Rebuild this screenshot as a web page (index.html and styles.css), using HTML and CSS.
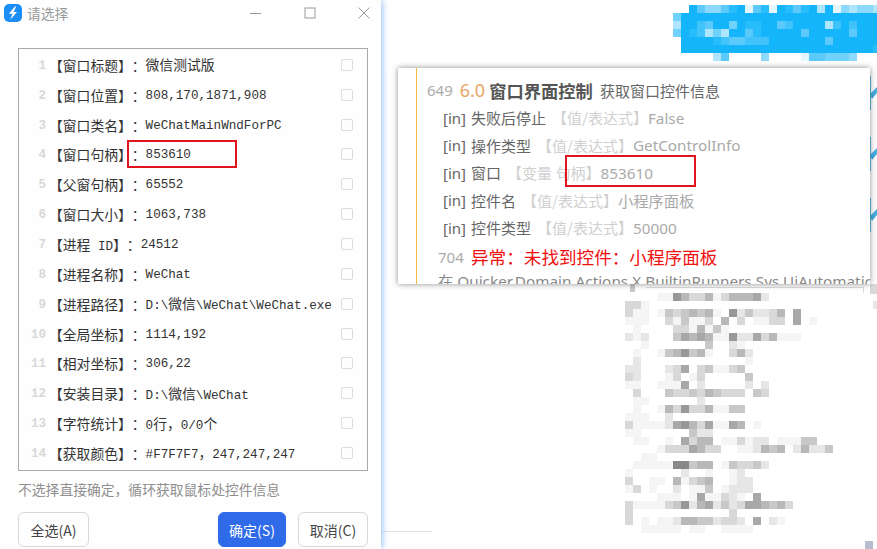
FILE: index.html
```html
<!DOCTYPE html>
<html lang="en">

<head>
    <meta charset="UTF-8" />
    <meta name="viewport" content="width=device-width, initial-scale=1.0" />
    <title>请选择</title>
    <link rel="stylesheet" href="styles.css">
</head>

<body>
    <div class="dialog">
        <div class="title-bar">
            <svg class="app-icon" viewBox="0 0 18 18" width="18" height="18">
                <rect width="18" height="18" rx="5" fill="#1c8df5" />
                <path d="M11 2.6 4.8 9.8h3.6L6.4 15.4 13 7.9H9.6l2.6-5.3z" fill="#fff" />
            </svg>
            <div class="title-text">请选择</div>
            <div class="win-buttons">
                <svg viewBox="0 0 12 12" width="12" height="12"><path d="M0 6.5h11" stroke="#999" fill="none" /></svg>
                <svg viewBox="0 0 12 12" width="12" height="12"><rect x="1" y="1" width="10" height="10" stroke="#999" fill="none" /></svg>
                <svg viewBox="0 0 12 12" width="12" height="12"><path d="M.5.5l11 11M11.5.5l-11 11" stroke="#999" fill="none" /></svg>
            </div>
        </div>

        <div class="list-box">
            <div class="row"><span class="num">1</span><span class="key">【窗口标题】：</span><span class="val"><span class="cn">微信测试版</span></span><span class="check"></span></div>
            <div class="row"><span class="num">2</span><span class="key">【窗口位置】：</span><span class="val">808,170,1871,908</span><span class="check"></span></div>
            <div class="row"><span class="num">3</span><span class="key">【窗口类名】：</span><span class="val">WeChatMainWndForPC</span><span class="check"></span></div>
            <div class="row"><span class="num">4</span><span class="key">【窗口句柄】：</span><span class="val">853610</span><span class="check"></span></div>
            <div class="row"><span class="num">5</span><span class="key">【父窗句柄】：</span><span class="val">65552</span><span class="check"></span></div>
            <div class="row"><span class="num">6</span><span class="key">【窗口大小】：</span><span class="val">1063,738</span><span class="check"></span></div>
            <div class="row"><span class="num">7</span><span class="key">【进程<span class="mono"> ID</span>】：</span><span class="val">24512</span><span class="check"></span></div>
            <div class="row"><span class="num">8</span><span class="key">【进程名称】：</span><span class="val">WeChat</span><span class="check"></span></div>
            <div class="row"><span class="num">9</span><span class="key">【进程路径】：</span><span class="val">D:\<span class="cn">微信</span>\WeChat\WeChat.exe</span><span class="check"></span></div>
            <div class="row"><span class="num">10</span><span class="key">【全局坐标】：</span><span class="val">1114,192</span><span class="check"></span></div>
            <div class="row"><span class="num">11</span><span class="key">【相对坐标】：</span><span class="val">306,22</span><span class="check"></span></div>
            <div class="row"><span class="num">12</span><span class="key">【安装目录】：</span><span class="val">D:\<span class="cn">微信</span>\WeChat</span><span class="check"></span></div>
            <div class="row"><span class="num">13</span><span class="key">【字符统计】：</span><span class="val">0<span class="cn">行，</span>0/0<span class="cn">个</span></span><span class="check"></span></div>
            <div class="row"><span class="num">14</span><span class="key">【获取颜色】：</span><span class="val">#F7F7F7<span class="cn">，</span>247,247,247</span><span class="check"></span></div>
            <div class="mark mark-left"></div>
        </div>

        <div class="hint">不选择直接确定，循环获取鼠标处控件信息</div>

        <div class="actions">
            <button class="btn btn-all">全选(A)</button>
            <button class="btn btn-ok">确定(S)</button>
            <button class="btn btn-cancel">取消(C)</button>
        </div>
    </div>

    <div class="backdrop">
        <svg class="mosaic" id="mosaic" width="877" height="549" viewBox="0 0 877 549"></svg>
    </div>

    <div class="log-card">
        <div class="log-inner">
            <div class="log-head"><span class="line-no">649</span><span class="version">6.0</span><b class="step">窗口界面控制</b><span class="step-note">获取窗口控件信息</span></div>
            <div class="param"><span class="tag">[in]</span><span class="pname">失败后停止</span><span class="ptype">【值/表达式】</span><span class="pval">False</span></div>
            <div class="param"><span class="tag">[in]</span><span class="pname">操作类型</span><span class="ptype">【值/表达式】</span><span class="pval">GetControlInfo</span></div>
            <div class="param"><span class="tag">[in]</span><span class="pname">窗口</span><span class="ptype">【变量 句柄】</span><span class="pval">853610</span></div>
            <div class="param"><span class="tag">[in]</span><span class="pname">控件名</span><span class="ptype">【值/表达式】</span><span class="pval">小程序面板</span></div>
            <div class="param"><span class="tag">[in]</span><span class="pname">控件类型</span><span class="ptype">【值/表达式】</span><span class="pval">50000</span></div>
            <div class="log-error"><span class="err-no">704</span><span class="err-text">异常：未找到控件：小程序面板</span></div>
            <div class="log-trace">在 Quicker.Domain.Actions.X.BuiltinRunners.Sys.UiAutomatic</div>
        </div>
        <div class="mark mark-right"></div>
    </div>

    <script src="mosaic.js"></script>
</body>

</html>
```

FILE: styles.css
```css
html, body {
    margin: 0;
    padding: 0;
    height: 549px;
    overflow: hidden;
    background: white;
    font-family: "Noto Sans", "Noto Sans CJK SC", sans-serif;
    text-spacing-trim: space-all;
}

body {
    display: flex;
}

.dialog {
    width: 381px;
    height: 549px;
    box-sizing: border-box;
    padding: 0 13px 0 18px;
    background: #fefefe;
    box-shadow: 1px 0 7px #8fbdf5;
    position: relative;
    z-index: 2;
    font-family: "Noto Sans CJK SC", sans-serif;
}

.title-bar {
    height: 48px;
    display: flex;
    align-items: flex-start;
    margin-left: -14px;
    margin-right: -2px;
    padding-top: 4px;
    box-sizing: border-box;
}

.app-icon {
    flex: none;
}

.title-text {
    margin-left: 5px;
    font-size: 13.8px;
    line-height: 18px;
    color: #9a9a9a;
}

.win-buttons {
    margin-left: auto;
    display: flex;
    gap: 42px;
    padding-top: 3px;
}

.list-box {
    position: relative;
    height: 423px;
    box-sizing: border-box;
    padding: 2px 0 0;
    border: 1px solid #aaa;
}

.row {
    height: 29.85px;
    display: flex;
    align-items: center;
    font-size: 13.8px;
    color: #333;
}

.num {
    width: 27px;
    flex: none;
    text-align: right;
    font-family: "Liberation Mono", monospace;
    font-size: 12.6px;
    font-weight: bold;
    color: #d8d8d8;
}

.key {
    flex: none;
    margin-left: 3px;
    margin-bottom: 2px;
    white-space: pre;
}

.mono {
    font-family: "Liberation Mono", monospace;
    font-size: 12.6px;
}

.val {
    flex: 1;
    font-family: "Liberation Mono", monospace;
    font-size: 12.6px;
    white-space: nowrap;
}

.cn {
    font-family: "Noto Sans CJK SC", sans-serif;
    font-size: 13.8px;
    line-height: 14px;
}

.check {
    width: 10px;
    height: 10px;
    flex: none;
    margin-right: 14px;
    margin-bottom: 2px;
    border: 1px solid #dcdcdc;
    border-radius: 2px;
}

.mark {
    position: absolute;
    box-sizing: border-box;
    border: 2px solid #e0141e;
}

.mark-left {
    left: 108px;
    top: 91px;
    width: 110px;
    height: 28px;
}

.hint {
    margin-top: 9px;
    font-size: 13.8px;
    line-height: 18px;
    color: #8f8f8f;
}

.actions {
    display: flex;
    gap: 12px;
    margin-top: 14px;
}

.btn {
    height: 35px;
    padding: 0;
    border: 1px solid #d8d8d8;
    border-radius: 6px;
    background: #fefefe;
    color: #444;
    font-family: "Noto Sans CJK SC", sans-serif;
    font-size: 14px;
}

.btn-all {
    width: 71px;
    margin-right: auto;
}

.btn-ok {
    width: 68px;
    border-color: #2f6be8;
    background: #2f6be8;
    color: #fff;
}

.btn-cancel {
    width: 70px;
}

.backdrop {
    flex: 1;
}

.mosaic {
    position: absolute;
    left: 0;
    top: 0;
}

.log-card {
    position: absolute;
    left: 398px;
    top: 68px;
    width: 472px;
    height: 216px;
    background: white;
    box-shadow: 0 0 6px rgba(0, 0, 0, 0.45);
    z-index: 1;
}

.log-inner {
    height: 216px;
    margin-left: 18px;
    padding-top: 8px;
    box-sizing: border-box;
    border-left: 1.5px solid #f8b940;
    overflow: hidden;
    white-space: nowrap;
}

.log-head {
    height: 28px;
    display: flex;
    align-items: center;
    padding-left: 10px;
}

.line-no {
    font-size: 15px;
    color: #aaa;
}

.version {
    margin-left: 7px;
    font-size: 18px;
    color: #e8a466;
}

.step {
    margin-left: 4px;
    font-size: 17.3px;
    color: #555;
    font-family: "Noto Sans CJK SC", sans-serif;
}

.step-note {
    margin-left: 7px;
    font-size: 15px;
    color: #666;
    font-family: "Noto Sans CJK SC", sans-serif;
}

.param {
    height: 27.5px;
    display: flex;
    align-items: center;
    padding-left: 26px;
    font-size: 15px;
}

.tag {
    width: 28px;
    color: #666;
}

.pname {
    color: #666;
    margin-right: 11px;
    font-family: "Noto Sans CJK SC", sans-serif;
}

.ptype {
    color: #d0d0d0;
    font-family: "Noto Sans CJK SC", sans-serif;
    margin-left: -5px;
}

.pval {
    color: #aaa;
    font-size: 15.3px;
}

.log-error {
    height: 30px;
    display: flex;
    align-items: center;
    padding-left: 21px;
}

.err-no {
    width: 33px;
    font-size: 15px;
    color: #aaa;
}

.err-text {
    font-size: 17.6px;
    color: #f01010;
    font-family: "Noto Sans CJK SC", sans-serif;
}

.log-trace {
    padding-left: 21px;
    font-size: 15.3px;
    line-height: 18px;
    color: #888;
}

.mark-right {
    left: 167px;
    top: 87px;
    width: 131px;
    height: 32px;
}
```

FILE: mosaic.js
```js
const svg = document.getElementById('mosaic');
const NS = 'http://www.w3.org/2000/svg';

function addRect(x, y, w, h, fill) {
    const r = document.createElementNS(NS, 'rect');
    r.setAttribute('x', x);
    r.setAttribute('y', y);
    r.setAttribute('width', w);
    r.setAttribute('height', h);
    r.setAttribute('fill', fill);
    svg.appendChild(r);
}

// each digit is one 8px cell, higher means stronger colour
function drawCells(rows, left, top, colours) {
    rows.forEach((row, j) => {
        [...row].forEach((c, i) => {
            if (c !== '0') addRect(left + i * 8, top + j * 8, 8, 8, colours[+c]);
        });
    });
}

const blues = ['', '#e4f6fe', '#aee4fc', '#8cd9fb', '#70d2fb', '#5cc9fb', '#40c3fb', '#28bcfb', '#15b5fb'];
drawCells([
    '008533578157187578281323321',
    '488888888888888888888888888',
    '288658848778856888826868882',
    '487624288578888858888858888',
    '088887655666888888858888888',
    '088888888888888888888888878',
    '000002500003000015544430000',
], 673, 5, blues);

const greys = ['', '#f5f5f5', '#e6e6e6', '#d8d8d8', '#c8c8c8', '#b8b8b8', '#a8a8a8', '#989898', '#888888'];
drawCells([
    '000011753351355562',
    '33100000000000000000000000000002',
    '3110143454510724223506',
    '111003141130503011330601',
    '0100003315141',
    '212000465651172263511100000000',
    '00100000004002100',
    '01001457451003520',
    '020000000000000100',
    '220002360341134',
    '320001301300000400',
    '110011160200000202',
    '0300043343543330430',
    '011000000200',
    '010015373351144',
    '11100200000',
    '31111267536116501',
    '110000004220',
    '0110010635501131220111440',
    '00001333653300112545025224',
    '00110000000',
    '011111884550143342',
    '100000020010012',
    '3001105134500122',
    '13010020114012220',
    '00001110161132106000',
    '311113472562423665453',
    '3000000000000300',
    '301011255442332060210',
    '0011111011001111000',
], 625, 293, greys);
addRect(865, 541, 8, 8, '#b8bcd0');

// window outline peeking out under the card
addRect(630, 284, 5, 8, '#c8c8c8');
addRect(646, 287, 218, 1, '#dcdcdc');
addRect(863, 287, 1, 6, '#dcdcdc');
addRect(870, 284, 7, 10, '#d8d8d8');

// faint divider beside the dialog
addRect(381, 531, 51, 1, '#e0e0e0');

// ticks of the blue chart behind the card
[76, 137, 198].forEach(y => {
    addRect(870, y, 1, 34, '#62bce8');
    const p = document.createElementNS(NS, 'path');
    p.setAttribute('d', `M870 ${y + 18}l7 -7v6l-5 6z`);
    p.setAttribute('fill', '#45aee0');
    svg.appendChild(p);
});
```
